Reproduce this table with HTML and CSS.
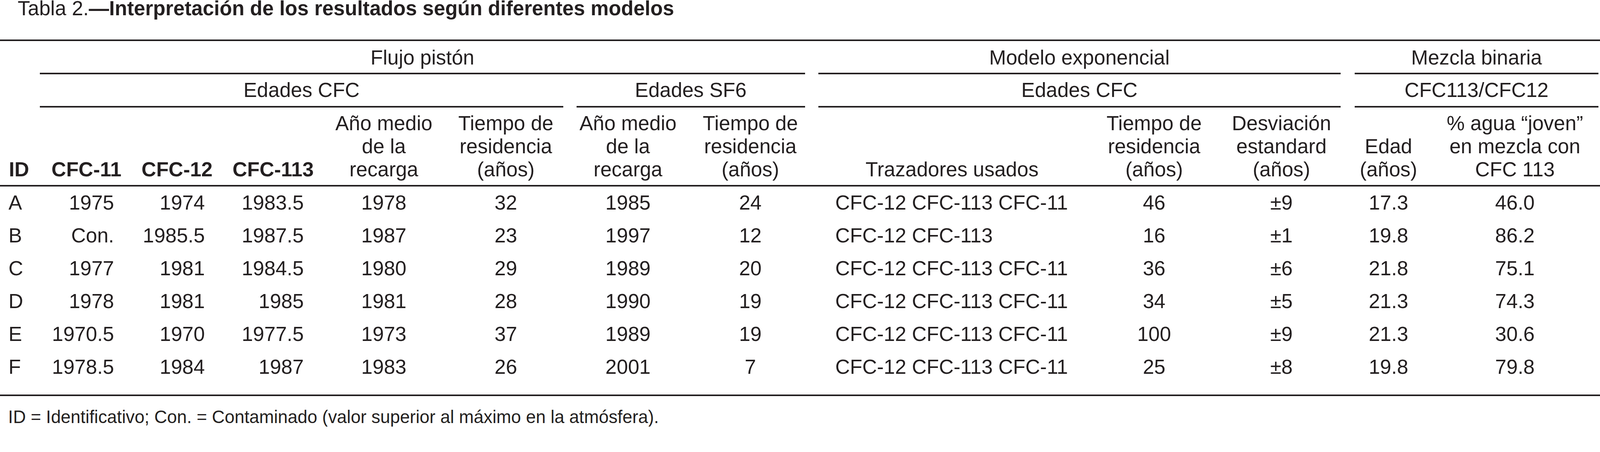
FILE: index.html
```html
<!DOCTYPE html>
<html lang="es">
<head>
<meta charset="utf-8">
<title>Tabla 2</title>
<link rel="stylesheet" href="styles.css">
</head>
<body>
<div class="title">Tabla 2.<b>—Interpretación de los resultados según diferentes modelos</b></div>
<table class="results">
  <colgroup>
    <col class="w-id"><col class="w-c11"><col class="w-c12"><col class="w-c113">
    <col class="w-ano1"><col class="w-t1"><col class="w-ano2"><col class="w-t2">
    <col class="w-tz"><col class="w-t3"><col class="w-dv"><col class="w-ed"><col class="w-pc">
  </colgroup>
  <thead>
    <tr class="r1">
      <th rowspan="3" class="id">ID</th>
      <th colspan="7" class="grp"><div class="rule">Flujo pistón</div></th>
      <th colspan="3" class="grp"><div class="rule">Modelo exponencial</div></th>
      <th colspan="2" class="grp end"><div class="rule">Mezcla binaria</div></th>
    </tr>
    <tr class="r2">
      <th colspan="5" class="grp"><div class="rule">Edades CFC</div></th>
      <th colspan="2" class="grp"><div class="rule">Edades SF6</div></th>
      <th colspan="3" class="grp"><div class="rule">Edades CFC</div></th>
      <th colspan="2" class="grp end"><div class="rule">CFC113/CFC12</div></th>
    </tr>
    <tr class="r3">
      <th class="bold c11">CFC-11</th>
      <th class="bold c12">CFC-12</th>
      <th class="bold c113">CFC-113</th>
      <th>Año medio<br>de la<br>recarga</th>
      <th>Tiempo de<br>residencia<br>(años)</th>
      <th>Año medio<br>de la<br>recarga</th>
      <th class="shift">Tiempo de<br>residencia<br>(años)</th>
      <th>Trazadores usados</th>
      <th>Tiempo de<br>residencia<br>(años)</th>
      <th>Desviación<br>estandard<br>(años)</th>
      <th>Edad<br>(años)</th>
      <th>% agua “joven”<br>en mezcla con<br>CFC 113</th>
    </tr>
  </thead>
  <tbody>
    <tr>
      <td class="id">A</td><td class="c11">1975</td><td class="c12">1974</td><td class="c113">1983.5</td>
      <td>1978</td><td>32</td><td>1985</td><td class="shift">24</td>
      <td class="tz">CFC-12 CFC-113 CFC-11</td><td>46</td><td>±9</td><td>17.3</td><td>46.0</td>
    </tr>
    <tr>
      <td class="id">B</td><td class="c11">Con.</td><td class="c12">1985.5</td><td class="c113">1987.5</td>
      <td>1987</td><td>23</td><td>1997</td><td class="shift">12</td>
      <td class="tz">CFC-12 CFC-113</td><td>16</td><td>±1</td><td>19.8</td><td>86.2</td>
    </tr>
    <tr>
      <td class="id">C</td><td class="c11">1977</td><td class="c12">1981</td><td class="c113">1984.5</td>
      <td>1980</td><td>29</td><td>1989</td><td class="shift">20</td>
      <td class="tz">CFC-12 CFC-113 CFC-11</td><td>36</td><td>±6</td><td>21.8</td><td>75.1</td>
    </tr>
    <tr>
      <td class="id">D</td><td class="c11">1978</td><td class="c12">1981</td><td class="c113">1985</td>
      <td>1981</td><td>28</td><td>1990</td><td class="shift">19</td>
      <td class="tz">CFC-12 CFC-113 CFC-11</td><td>34</td><td>±5</td><td>21.3</td><td>74.3</td>
    </tr>
    <tr>
      <td class="id">E</td><td class="c11">1970.5</td><td class="c12">1970</td><td class="c113">1977.5</td>
      <td>1973</td><td>37</td><td>1989</td><td class="shift">19</td>
      <td class="tz">CFC-12 CFC-113 CFC-11</td><td>100</td><td>±9</td><td>21.3</td><td>30.6</td>
    </tr>
    <tr>
      <td class="id">F</td><td class="c11">1978.5</td><td class="c12">1984</td><td class="c113">1987</td>
      <td>1983</td><td>26</td><td>2001</td><td class="shift">7</td>
      <td class="tz">CFC-12 CFC-113 CFC-11</td><td>25</td><td>±8</td><td>19.8</td><td>79.8</td>
    </tr>
  </tbody>
</table>
<div class="note">ID = Identificativo; Con. = Contaminado (valor superior al máximo en la atmósfera).</div>
</body>
</html>
```

FILE: styles.css
```css
/* one design unit = 1/4335 of the viewport width */
:root { --u: calc(100vw / 4335); }

* { box-sizing: border-box; }
html, body { margin: 0; padding: 0; background: #ffffff; overflow: hidden; }
body {
  font-family: "Liberation Sans", Arial, Helvetica, sans-serif;
  color: #231f20;
}

.title {
  font-size: calc(55 * var(--u));
  line-height: calc(46 * var(--u));
  height: calc(46 * var(--u));
  padding-left: calc(48 * var(--u));
  margin: 0 0 calc(61 * var(--u));
  white-space: nowrap;
}
.title b { font-weight: bold; }

.results {
  width: 100%;
  table-layout: fixed;
  border-collapse: separate;
  border-spacing: 0;
  border-top: 4px solid #231f20;
  border-bottom: 4px solid #231f20;
  font-size: calc(55 * var(--u));
  line-height: calc(62.5 * var(--u));
}

.w-id { width: calc(90 * var(--u)); }
.w-c11 { width: calc(255 * var(--u)); }
.w-c12 { width: calc(255 * var(--u)); }
.w-c113 { width: calc(283 * var(--u)); }
.w-ano1 { width: calc(314 * var(--u)); }
.w-t1 { width: calc(347 * var(--u)); }
.w-ano2 { width: calc(315 * var(--u)); }
.w-t2 { width: calc(340 * var(--u)); }
.w-tz { width: calc(761 * var(--u)); }
.w-t3 { width: calc(334 * var(--u)); }
.w-dv { width: calc(356 * var(--u)); }
.w-ed { width: calc(224 * var(--u)); }
.w-pc { width: calc(461 * var(--u)); }

.results th,
.results td {
  padding: 0;
  font-weight: normal;
  white-space: nowrap;
  text-align: center;
}

.rule {
  border-bottom: 4px solid #231f20;
  margin: 0 calc(18 * var(--u));
}
.grp.end .rule { margin: 0 calc(4 * var(--u)) 0 calc(20 * var(--u)); }

.r1 th.grp { padding-top: calc(13.7 * var(--u)); }
.r1 .rule { padding-bottom: calc(9.8 * var(--u)); }
.r2 th.grp { padding-top: calc(11.7 * var(--u)); }
.r2 .rule { padding-bottom: calc(10.8 * var(--u)); }

.results th.id {
  text-align: left;
  padding: 0 0 calc(10.8 * var(--u)) calc(24 * var(--u));
  vertical-align: bottom;
  font-weight: bold;
  border-bottom: 4px solid #231f20;
}

.r3 th {
  padding-top: calc(11.7 * var(--u));
  padding-bottom: calc(10.8 * var(--u));
  vertical-align: bottom;
  border-bottom: 4px solid #231f20;
}
.results th.bold { font-weight: bold; }

.results th.c11 { text-align: right; padding-right: calc(16 * var(--u)); }
.results th.c12 { text-align: right; padding-right: calc(24 * var(--u)); }
.results th.c113 { text-align: right; padding-right: calc(33 * var(--u)); }
.results th.shift,
.results td.shift { padding-left: calc(8 * var(--u)); }

.results tbody td {
  padding-top: calc(12.7 * var(--u));
  padding-bottom: calc(13.8 * var(--u));
}
.results tbody tr:last-child td { padding-bottom: calc(42.8 * var(--u)); }

.results td.id { text-align: left; padding-left: calc(23 * var(--u)); }
.results td.c11 { text-align: right; padding-right: calc(36 * var(--u)); }
.results td.c12 { text-align: right; padding-right: calc(45 * var(--u)); }
.results td.c113 { text-align: right; padding-right: calc(60 * var(--u)); }
.results td.tz { text-align: left; padding-left: calc(64 * var(--u)); }

.note {
  font-size: calc(48 * var(--u));
  line-height: calc(50 * var(--u));
  padding-left: calc(22 * var(--u));
  margin-top: calc(32.4 * var(--u));
  white-space: nowrap;
}
```
